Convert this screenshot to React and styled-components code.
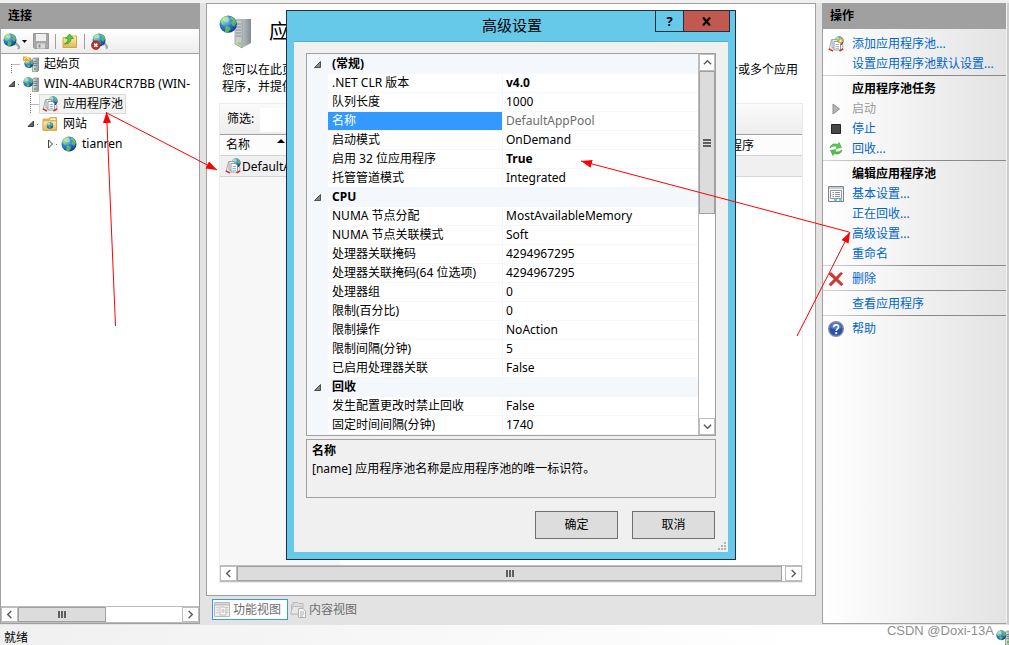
import { useState } from 'react';
import styled, { createGlobalStyle, css } from 'styled-components';

const GlobalStyle = createGlobalStyle`
  * {
    box-sizing: border-box;
  }

  body {
    margin: 0;
    background: #e3e3e3;
    color: #000;
    font-family: 'Noto Sans', 'Noto Sans CJK SC', sans-serif;
    font-size: 12px;
    line-height: 18px;
  }

  button,
  input {
    font: inherit;
    color: inherit;
  }
`;

// Tree on the left side
const treeNodes = [
  { level: 0, icon: 'home', label: '起始页', guide: 'first' },
  { level: 0, icon: 'server', label: 'WIN-4ABUR4CR7BB (WIN-', guide: 'open' },
  { level: 1, icon: 'pool', label: '应用程序池', guide: 'branch' },
  { level: 1, icon: 'folder', label: '网站', guide: 'open' },
  { level: 2, icon: 'globe', label: 'tianren', guide: 'closed' },
];

// Advanced settings of the application pool
const settings = [
  {
    category: '(常规)',
    rows: [
      { name: '.NET CLR 版本', value: 'v4.0', changed: true },
      { name: '队列长度', value: '1000' },
      { name: '名称', value: 'DefaultAppPool', readOnly: true },
      { name: '启动模式', value: 'OnDemand' },
      { name: '启用 32 位应用程序', value: 'True', changed: true },
      { name: '托管管道模式', value: 'Integrated' },
    ],
  },
  {
    category: 'CPU',
    rows: [
      { name: 'NUMA 节点分配', value: 'MostAvailableMemory' },
      { name: 'NUMA 节点关联模式', value: 'Soft' },
      { name: '处理器关联掩码', value: '4294967295' },
      { name: '处理器关联掩码(64 位选项)', value: '4294967295' },
      { name: '处理器组', value: '0' },
      { name: '限制(百分比)', value: '0' },
      { name: '限制操作', value: 'NoAction' },
      { name: '限制间隔(分钟)', value: '5' },
      { name: '已启用处理器关联', value: 'False' },
    ],
  },
  {
    category: '回收',
    rows: [
      { name: '发生配置更改时禁止回收', value: 'False' },
      { name: '固定时间间隔(分钟)', value: '1740' },
    ],
  },
];

const actionGroups = [
  {
    items: [
      { label: '添加应用程序池...', icon: 'addPool' },
      { label: '设置应用程序池默认设置...' },
    ],
  },
  {
    title: '应用程序池任务',
    items: [
      { label: '启动', icon: 'play', disabled: true },
      { label: '停止', icon: 'stop' },
      { label: '回收...', icon: 'recycle' },
    ],
  },
  {
    title: '编辑应用程序池',
    items: [
      { label: '基本设置...', icon: 'form' },
      { label: '正在回收...' },
      { label: '高级设置...' },
      { label: '重命名' },
    ],
  },
  { items: [{ label: '删除', icon: 'remove' }] },
  { items: [{ label: '查看应用程序' }] },
  { items: [{ label: '帮助', icon: 'help' }] },
];

/* ---------- Icons ---------- */

function IconDefs() {
  return (
    <HiddenSvg width="0" height="0" aria-hidden="true">
      <defs>
        <radialGradient id="sea" cx="0.35" cy="0.3" r="0.8">
          <stop offset="0" stopColor="#9fd4fb" />
          <stop offset="0.45" stopColor="#2f7fd8" />
          <stop offset="1" stopColor="#0b2f8c" />
        </radialGradient>
        <linearGradient id="land" x1="0" y1="0" x2="1" y2="1">
          <stop offset="0" stopColor="#a8ec8a" />
          <stop offset="1" stopColor="#2c9a35" />
        </linearGradient>
        <linearGradient id="metal" x1="0" y1="0" x2="1" y2="0">
          <stop offset="0" stopColor="#e4e8ea" />
          <stop offset="1" stopColor="#848b90" />
        </linearGradient>
        <linearGradient id="paper" x1="0" y1="0" x2="0" y2="1">
          <stop offset="0" stopColor="#fdf0b4" />
          <stop offset="1" stopColor="#e3b650" />
        </linearGradient>
      </defs>
    </HiddenSvg>
  );
}

function GlobeShape() {
  return (
    <>
      <circle cx="8" cy="8" r="7.5" fill="url(#sea)" />
      <path
        d="M1.2 6C2 3 4.5 1 7.5 1l1 1.5-2 1.2.8 1.8-2.2 1.7L4.5 9 3 8.2zM10 1.2c2.5.8 4.5 2.8 5.2 5.3L13.5 10l-2-1-1.3-2.5L12 5l-2-1.5zM6 9.5l3.5 1.2.5 1.8-2.2 2.7c-1.5 0-2.300-.3-2.8-.7z"
        fill="url(#land)"
      />
      <ellipse cx="6" cy="4" rx="3" ry="2" fill="#fff" opacity="0.35" />
    </>
  );
}

function ServerShape() {
  return (
    <>
      <path d="M9.5 3 11.5 2H15.500V15l-2 1h-4z" fill="url(#metal)" stroke="#7b8388" strokeWidth="0.7" />
      <path d="M10.5 5.500h3.500M10.5 7.500h3.500M10.5 9.500h3.500" stroke="#6e767c" strokeWidth="0.8" />
      <rect x="11" y="12" width="2" height="2" fill="#55c936" />
    </>
  );
}

function PoolShape() {
  return (
    <>
      <g transform="translate(6 0) scale(0.62)">
        <GlobeShape />
      </g>
      <path d="M3.500 3.500 1.500 12M14.500 8l.5 4" stroke="#a9afb5" strokeWidth="1" />
      <path d="M4 3.500h5.500V12H4z" fill="#e9ecef" stroke="#8d949b" strokeWidth="0.8" />
      <path d="M6 5.500h4.500L12.500 7.500V14H6z" fill="#fff" stroke="#808890" strokeWidth="0.8" />
      <path d="M7.500 8.500h3.500M7.500 10.500h3.500M7.500 12.300h3.500" stroke="#7aa2c8" strokeWidth="0.8" />
      <path d="M.7 12.800 5 15M15.300 12.800 11.500 15" stroke="#cf3a30" strokeWidth="1.700" />
    </>
  );
}

const shapes = {
  globe: <GlobeShape />,
  server: (
    <>
      <ServerShape />
      <g transform="translate(0 1) scale(0.66)">
        <GlobeShape />
      </g>
    </>
  ),
  home: (
    <>
      <ServerShape />
      <g transform="translate(1 2.500) scale(0.62)">
        <GlobeShape />
      </g>
      <path d="M0 .5h3.500l1 1H8v3.500H0z" fill="#f3a52b" />
      <path d="M1 3.500 3.500 1.500 6 3.500" fill="none" stroke="#fff0b8" />
    </>
  ),
  pool: <PoolShape />,
  addPool: (
    <>
      <PoolShape />
      <path d="m12.500 1 .8 2.200 2.200-.7-1 2 1.500 1.500-2.200.3-.6 2.200-1.400-1.800-2.200.5 1-2-1.200-1.800 2.300-.2z" fill="#f8a72c" />
      <circle cx="12.600" cy="4.700" r="1.200" fill="#fff3b0" />
    </>
  ),
  folder: (
    <>
      <path d="M1 3h6l1-1.500h6.500V14H1z" fill="#e8bd57" stroke="#c99a37" strokeWidth="0.7" />
      <path d="M8.500 2.500h5v1.500h-5z" fill="#fffbe8" />
      <path d="M1 5h13.500v9.500H1z" fill="url(#paper)" stroke="#d0a445" strokeWidth="0.7" />
      <g transform="translate(4.500 6) scale(0.43)">
        <GlobeShape />
      </g>
    </>
  ),
  connect: (
    <>
      <path d="m10 11 2.500-1 3 3.500-1.500 1.500" fill="none" stroke="#9aa7b0" strokeWidth="2" />
      <g transform="scale(0.82)">
        <GlobeShape />
      </g>
    </>
  ),
  disconnect: (
    <>
      <path d="m11 11 2-1 2.500 3.500-1.500 1" fill="none" stroke="#9aa7b0" strokeWidth="2" />
      <g transform="translate(1 0) scale(0.82)">
        <GlobeShape />
      </g>
      <circle cx="4.500" cy="11.500" r="4" fill="#c72c22" stroke="#8d140d" strokeWidth="0.6" />
      <path d="m3 10 3 3M6 10l-3 3" stroke="#fff" strokeWidth="1.400" />
    </>
  ),
  save: (
    <>
      <path d="M.5.5h15v15h-14l-1-1z" fill="#a7a7a7" stroke="#979797" />
      <path d="M3 1h10v7H3z" fill="#efefef" />
      <path d="M4 10.500h8v5H4z" fill="#dadada" />
      <path d="M5.500 11.500h2v3h-2z" fill="#8d8d8d" />
    </>
  ),
  up: (
    <>
      <path d="M1 4.500h5L8 3h6.500v11.500H1z" fill="url(#paper)" stroke="#c99a37" strokeWidth="0.8" />
      <path d="M2.500 11C5 10 6 8 6 5.500H3.500L7.500 1l4 4.500H9C9 9 6 11.500 2.500 11z" fill="#59cc3d" stroke="#2d8d22" strokeWidth="0.7" />
    </>
  ),
  play: <path d="M5 3v10l6.500-5z" fill="#b5b5b5" stroke="#8f8f8f" />,
  stop: <path d="M3.500 3.500h9v9h-9z" fill="#484848" stroke="#222" />,
  recycle: (
    <>
      <path d="M2 7c.5-3 3-4.500 6-4l1.500.5L11 1.500l2.500 5-5.500 1 1.300-1.700C7 4.500 4.500 5 2 7z" fill="#59cb4b" stroke="#3c9f37" strokeWidth="0.6" />
      <path d="M14 9c-.5 3-3 4.500-6 4l-1.500-.5L5 14.500l-2.500-5 5.500-1-1.300 1.700C9 11.500 11.500 11 14 9z" fill="#4fc244" stroke="#3c9f37" strokeWidth="0.6" />
    </>
  ),
  form: (
    <>
      <path d="M.5.5h15v15H.5z" fill="#f7f7f7" stroke="#7d8388" />
      <path d="M1 2h14" stroke="#b9bec2" strokeWidth="1.500" />
      <path d="M2.500 4.500h11v8h-11z" fill="#fff" stroke="#9097a0" />
      <path d="M4.500 6.500H6M4.500 8.500H6M4.500 10.500H6M7 6.500h5M7 8.500h5M7 10.500h5" stroke="#8a9097" />
      <path d="M6 14h3M11 14h3" stroke="#3cc5dd" strokeWidth="1.500" />
    </>
  ),
  remove: (
    <path
      d="M1 3 3 1.500 8 6.300l4.800-4.800L14.500 2.300 9.800 8l5.200 5.200-1.600 1.600L8 9.800 3 14.800l-2-1.300L6.200 8z"
      fill="#d9362c"
      stroke="#a51c18"
      strokeWidth="0.6"
    />
  ),
  help: (
    <>
      <circle cx="8" cy="8" r="7.300" fill="#2453b5" stroke="#8a8f98" strokeWidth="1.400" />
      <path d="M2.500 7a5.500 5.500 0 0 1 11 0c-3 1.500-8 1.500-11 0z" fill="#7ea4e8" opacity="0.5" />
      <path d="M5.700 6.200c0-3 4.800-3 4.800-.2C10.500 7.800 8.200 7.800 8.200 10" fill="none" stroke="#fff" strokeWidth="1.700" />
      <circle cx="8.200" cy="12.200" r="1.100" fill="#fff" />
    </>
  ),
  features: (
    <>
      <path d="M.5.5h15v14H.5z" fill="#ededed" stroke="#b9b9b9" />
      <path d="M1 2.500h14" stroke="#c3c3c3" strokeWidth="2" />
      <path d="M2.500 5.500h2M2.500 8h2M2.500 10.500h2M10 5.500h4M10 8h4M10 10.500h4" stroke="#c3c3c3" />
      <path d="M6 5h4.500L12 6.500V13H6z" fill="#fafafa" stroke="#c0c0c0" />
      <path d="M7.500 8h3M7.500 10h3" stroke="#a8a8a8" />
    </>
  ),
  content: (
    <>
      <path d="M1.500 3h1.500V.500h5l1 1h4V12H1.500z" fill="#dcdcdc" stroke="#b9b9b9" />
      <path d="M.5 12 3 4.500h8V12z" fill="#e8e8e8" stroke="#bdbdbd" />
      <path d="M8.500 6.500H13l2.500 2.500v6.500h-7z" fill="#f8f8f8" stroke="#b0b0b0" />
      <path d="M10 10h4M10 12h4M10 14h3" stroke="#adadad" />
    </>
  ),
};

function Icon({ name, size = 16 }) {
  return (
    <IconSvg width={size} height={size} viewBox="0 0 16 16" aria-hidden="true">
      {shapes[name]}
    </IconSvg>
  );
}

function PageIcon() {
  return (
    <IconSvg width="34" height="34" viewBox="0 0 34 34" aria-hidden="true">
      <path d="M16 5 20 4h12v24l-9 5-7-4z" fill="url(#metal)" />
      <path d="M16 5h7v28l-7-4z" fill="#c9cdd0" stroke="#8b9297" strokeWidth="0.7" />
      <path d="M17 9h5M17 12h5M17 15h5M17 18h5M17 21h5" stroke="#858c91" />
      <rect x="19" y="27" width="3" height="3" fill="#8ee23c" />
      <g transform="scale(1.15)">
        <GlobeShape />
      </g>
    </IconSvg>
  );
}

function Guide({ kind }) {
  return (
    <IconSvg width="17" height="20" viewBox="0 0 17 20" aria-hidden="true">
      {kind === 'first' && <path d="M8.500 10v10M8.500 10.500H17" fill="none" stroke="#777" strokeDasharray="1 1" />}
      {kind === 'branch' && <path d="M8.500 0v20M8.500 10.500H17" fill="none" stroke="#777" strokeDasharray="1 1" />}
      {kind === 'open' && (
        <>
          <path d="M6 12.500h5.500V7z" fill="#666" stroke="#222" strokeWidth="0.8" />
          <path d="M15 10.500h2" stroke="#777" strokeDasharray="1 1" />
        </>
      )}
      {kind === 'closed' && (
        <>
          <path d="M7.500 6v8l4-4z" fill="#fff" stroke="#444" />
          <path d="M15 10.500h2" stroke="#777" strokeDasharray="1 1" />
        </>
      )}
    </IconSvg>
  );
}

const chevrons = {
  left: 'M7 1 3 5l4 4',
  right: 'M3 1l4 4-4 4',
  up: 'M1 7l4-4 4 4',
  down: 'M1 3l4 4 4-4',
};

function Chevron({ to }) {
  return (
    <IconSvg width="9" height="9" viewBox="0 0 10 10" aria-hidden="true">
      <path d={chevrons[to]} fill="none" stroke="#5a5a5a" strokeWidth="1.600" />
    </IconSvg>
  );
}

function ScrollBar({ vertical, thumb, rest }) {
  return (
    <ScrollTrack $vertical={vertical}>
      <ScrollButton type="button" aria-label={vertical ? '向上' : '向左'}>
        <Chevron to={vertical ? 'up' : 'left'} />
      </ScrollButton>
      <ScrollThumb $vertical={vertical} $grow={thumb}>
        <i />
        <i />
        <i />
      </ScrollThumb>
      <ScrollRest $grow={rest} />
      <ScrollButton type="button" aria-label={vertical ? '向下' : '向右'}>
        <Chevron to={vertical ? 'down' : 'right'} />
      </ScrollButton>
    </ScrollTrack>
  );
}

/* ---------- Panels ---------- */

function ConnectionsPanel() {
  return (
    <SidePanel>
      <PanelHeader>连接</PanelHeader>
      <Toolbar>
        <ToolButton type="button" aria-label="连接">
          <Icon name="connect" size={17} />
          <svg width="5" height="3" viewBox="0 0 5 3" aria-hidden="true">
            <path d="M0 0h5L2.500 3z" />
          </svg>
        </ToolButton>
        <ToolButton type="button" aria-label="保存" disabled>
          <Icon name="save" />
        </ToolButton>
        <ToolDivider />
        <ToolButton type="button" aria-label="向上">
          <Icon name="up" />
        </ToolButton>
        <ToolDivider />
        <ToolButton type="button" aria-label="断开连接">
          <Icon name="disconnect" size={17} />
        </ToolButton>
      </Toolbar>
      <Tree>
        {treeNodes.map((node) => (
          <TreeRow key={node.label} $level={node.level}>
            <Guide kind={node.guide} />
            <TreeLabel type="button" $selected={node.icon === 'pool'}>
              <Icon name={node.icon} />
              {node.label}
            </TreeLabel>
          </TreeRow>
        ))}
      </Tree>
      <ScrollBar thumb={87} rest={77} />
    </SidePanel>
  );
}

function PoolsPage() {
  const [filter, setFilter] = useState('');

  return (
    <PageColumn>
      <Page>
        <PageTitle>
          <PageIcon />
          <h1>应用程序池</h1>
        </PageTitle>
        <PageText>
          您可以在此页上查看和管理服务器上的应用程序池列表。应用程序池与工作进程相关联，包含一个或多个应用程序，并提供不同应用程序之间的隔离。
        </PageText>
        <PoolList>
          <FilterBar>
            <label htmlFor="filter">筛选:</label>
            <input id="filter" value={filter} onChange={(e) => setFilter(e.target.value)} />
          </FilterBar>
          <PoolTable>
            <thead>
              <tr>
                <th>
                  <SortHeader>
                    名称
                    <svg width="8" height="4" viewBox="0 0 8 4" aria-hidden="true">
                      <path d="M0 4h8L4 0z" />
                    </svg>
                  </SortHeader>
                </th>
                <th />
                <th>应用程序</th>
              </tr>
            </thead>
            <tbody>
              <tr>
                <td>
                  <PoolName>
                    <Icon name="pool" />
                    DefaultAppPool
                  </PoolName>
                </td>
                <td />
                <td />
              </tr>
            </tbody>
          </PoolTable>
          <SortedColumn />
          <ScrollBar thumb={545} rest={3} />
        </PoolList>
      </Page>
      <ViewTabs>
        <ViewTab type="button" $active>
          <Icon name="features" />
          功能视图
        </ViewTab>
        <ViewTab type="button">
          <Icon name="content" />
          内容视图
        </ViewTab>
      </ViewTabs>
    </PageColumn>
  );
}

function ActionsPanel() {
  return (
    <SidePanel $openEdge>
      <PanelHeader>操作</PanelHeader>
      <Actions>
        {actionGroups.map((group, index) => (
          <ActionGroup key={index}>
            {group.title && <h2>{group.title}</h2>}
            {group.items.map((item) => (
              <ActionRow key={item.label}>
                <ActionIcon>{item.icon && <Icon name={item.icon} />}</ActionIcon>
                <ActionLink href="#" aria-disabled={item.disabled} $disabled={item.disabled}>
                  {item.label}
                </ActionLink>
              </ActionRow>
            ))}
          </ActionGroup>
        ))}
      </Actions>
    </SidePanel>
  );
}

function SettingsDialog() {
  const [selected, setSelected] = useState('名称');

  return (
    <Dialog role="dialog" aria-labelledby="dialog-title">
      <TitleBar>
        <h2 id="dialog-title">高级设置</h2>
        <CaptionButtons>
          <CaptionButton type="button">?</CaptionButton>
          <CaptionButton type="button" aria-label="关闭" $close>
            <svg width="9" height="9" viewBox="0 0 9 9" aria-hidden="true">
              <path d="M1 0.500 8 8.500M8 0.500 1 8.500" stroke="#000" strokeWidth="2.200" />
            </svg>
          </CaptionButton>
        </CaptionButtons>
      </TitleBar>
      <DialogBody>
        <PropertyGrid>
          <PropertyTable>
            {settings.map((group) => (
              <tbody key={group.category}>
                <CategoryRow>
                  <td>
                    <svg width="7" height="7" viewBox="0 0 7 7" aria-hidden="true">
                      <path d="M0.500 6.500h6v-6z" fill="#888" stroke="#333" strokeWidth="0.8" />
                    </svg>
                  </td>
                  <th colSpan="2">{group.category}</th>
                </CategoryRow>
                {group.rows.map((row) => (
                  <PropertyRow
                    key={row.name}
                    $selected={row.name === selected}
                    $changed={row.changed}
                    $readOnly={row.readOnly}
                    onClick={() => setSelected(row.name)}
                  >
                    <td />
                    <th>{row.name}</th>
                    <td>{row.value}</td>
                  </PropertyRow>
                ))}
              </tbody>
            ))}
          </PropertyTable>
          <ScrollBar vertical thumb={142} rest={205} />
        </PropertyGrid>
        <Description>
          <strong>名称</strong>
          <p>[name] 应用程序池名称是应用程序池的唯一标识符。</p>
        </Description>
        <DialogButtons>
          <DialogButton type="button">确定</DialogButton>
          <DialogButton type="button">取消</DialogButton>
        </DialogButtons>
        <SizeGrip width="9" height="9" viewBox="0 0 9 9" aria-hidden="true">
          <path d="M6 1h2M3 4h2M6 4h2M0 7h2M3 7h2M6 7h2" stroke="#b4b4b4" strokeWidth="2" />
        </SizeGrip>
      </DialogBody>
    </Dialog>
  );
}

// Red arrows that show the order of the clicks
function Arrows() {
  return (
    <ArrowLayer width="1009" height="645" viewBox="0 0 1009 645" aria-hidden="true">
      <defs>
        <marker id="head" markerWidth="12" markerHeight="8" refX="11" refY="4" orient="auto" markerUnits="userSpaceOnUse">
          <path d="M0 0 11 4 0 8z" fill="#f00" />
        </marker>
      </defs>
      <g stroke="#f00" strokeWidth="1" fill="none">
        <path d="M115.500 326 106.500 112" markerEnd="url(#head)" />
        <path d="M107 113 217 170" markerEnd="url(#head)" />
        <path d="M849 232 581 161" markerEnd="url(#head)" />
        <path d="M797 336 850 232" markerEnd="url(#head)" />
      </g>
    </ArrowLayer>
  );
}

export default function App() {
  return (
    <Window>
      <GlobalStyle />
      <IconDefs />
      <Workspace>
        <ConnectionsPanel />
        <PoolsPage />
        <ActionsPanel />
      </Workspace>
      <StatusBar>
        <span>就绪</span>
        <Watermark>
          CSDN @Doxi-13A
          <Icon name="server" />
        </Watermark>
      </StatusBar>
      <SettingsDialog />
      <Arrows />
    </Window>
  );
}

/* ---------- Styles ---------- */

const HiddenSvg = styled.svg`
  position: absolute;
`;

const IconSvg = styled.svg`
  display: block;
  flex: none;
`;

const Window = styled.div`
  position: relative;
  display: flex;
  flex-direction: column;
  height: 100vh;
  overflow: hidden;
  border-top: 3px solid #f0f0f0;
`;

const Workspace = styled.main`
  flex: 1;
  min-height: 0;
  display: grid;
  grid-template-columns: 200px 1fr 185px;
  gap: 6px;
  border-right: 2px solid #cdcdcd;
  border-bottom: 1px solid #e3e3e3;
`;

const SidePanel = styled.section`
  display: flex;
  flex-direction: column;
  min-width: 0;
  background: #fff;
  border: 1px solid #a0a0a0;
  border-top: 0;
  ${({ $openEdge }) => $openEdge && 'border-right-color: #f0f0f0;'}
`;

const PanelHeader = styled.h2`
  margin: 0;
  height: 26px;
  padding: 0 7px;
  background: #a0a0a0;
  font-size: 12px;
  line-height: 26px;
`;

const Toolbar = styled.div`
  display: flex;
  align-items: center;
  gap: 6px;
  height: 25px;
  padding: 0 2px;
  background: linear-gradient(#fff, #ececec);
  border-bottom: 1px solid #a0a0a0;
`;

const ToolButton = styled.button`
  display: flex;
  align-items: center;
  gap: 2px;
  padding: 0;
  border: 0;
  background: none;
`;

const ToolDivider = styled.span`
  width: 1px;
  height: 15px;
  background: #a0a0a0;
`;

const Tree = styled.ul`
  flex: 1;
  margin: 0;
  padding: 0;
  list-style: none;
  overflow: hidden;
`;

const TreeRow = styled.li`
  display: flex;
  align-items: center;
  height: 20px;
  padding-left: ${({ $level }) => 2 + $level * 19}px;
`;

const TreeLabel = styled.button`
  display: flex;
  align-items: center;
  gap: 5px;
  height: 20px;
  padding: 0 2px;
  border: 1px solid ${({ $selected }) => ($selected ? '#d9d9d9' : 'transparent')};
  background: ${({ $selected }) => ($selected ? '#f2f2f2' : 'none')};
  white-space: nowrap;
`;

const ScrollTrack = styled.div`
  display: flex;
  flex: none;
  flex-direction: ${({ $vertical }) => ($vertical ? 'column' : 'row')};
  ${({ $vertical }) => ($vertical ? 'width: 17px;' : 'height: 17px;')}
  background: #fff;
  border: 0 solid #bdbdbd;
  ${({ $vertical }) => ($vertical ? 'border-left-width: 1px;' : 'border-width: 1px 0;')}
`;

const ScrollButton = styled.button`
  display: flex;
  flex: 0 0 17px;
  align-items: center;
  justify-content: center;
  padding: 0;
  border: 1px solid #bdbdbd;
  background: #fff;
`;

const ScrollThumb = styled.div`
  display: flex;
  flex: ${({ $grow }) => $grow} 1 0;
  flex-direction: ${({ $vertical }) => ($vertical ? 'column' : 'row')};
  align-items: center;
  justify-content: center;
  gap: 1px;
  background: #dcdcdc;
  border: 1px solid #a0a0a0;

  i {
    ${({ $vertical }) => ($vertical ? 'width: 8px; height: 2px;' : 'width: 2px; height: 7px;')}
    background: #606060;
  }
`;

const ScrollRest = styled.div`
  flex: ${({ $grow }) => $grow} 1 0;
`;

const PageColumn = styled.div`
  display: flex;
  flex-direction: column;
  min-width: 0;
`;

const Page = styled.section`
  flex: 1;
  min-height: 0;
  display: flex;
  flex-direction: column;
  padding: 11px 12px 12px;
  background: #fff;
  border: 1px solid #a0a0a0;
`;

const PageTitle = styled.header`
  display: flex;
  align-items: center;
  gap: 16px;
  height: 34px;

  h1 {
    margin: 0;
    font-size: 20px;
    font-weight: 400;
    line-height: 28px;
  }
`;

const PageText = styled.p`
  margin: 12px 2px 8px 3px;
  line-height: 17px;
`;

const PoolList = styled.div`
  flex: 1;
  min-height: 0;
  display: flex;
  flex-direction: column;
  border: 1px solid #ececec;
`;

const FilterBar = styled.div`
  display: flex;
  align-items: stretch;
  height: 31px;
  padding-bottom: 2px;
  background: linear-gradient(#fbfbfb, #ededed);
  border-bottom: 1px solid #a0a0a0;

  label {
    width: 40px;
    padding-left: 7px;
    line-height: 30px;
  }

  input {
    width: 160px;
    margin-top: 4px;
    border: 0;
    background: #fff;
  }
`;

const PoolTable = styled.table`
  width: 100%;
  table-layout: fixed;
  border-spacing: 0;

  th,
  td {
    height: 20px;
    padding: 0 5px;
    border-bottom: 1px solid #d5d5d5;
    font-weight: 400;
    text-align: left;
    white-space: nowrap;
    line-height: 19px;
  }

  th {
    padding: 0 6px;
    background: #fcfcfc;
  }

  th:first-child {
    width: 120px;
  }

  th:last-child {
    width: 102px;
  }

  td {
    height: 21px;
    background: #f0f0f0;
  }
`;

const SortHeader = styled.span`
  display: flex;
  align-items: center;
  gap: 27px;
  padding-bottom: 1px;

  svg {
    margin-bottom: 8px;
  }
`;

const PoolName = styled.span`
  display: flex;
  align-items: center;
  gap: 1px;
`;

const SortedColumn = styled.div`
  flex: 1;
  width: 120px;
  background: #f7f7f7;
`;

const ViewTabs = styled.div`
  display: flex;
  height: 28px;
  padding: 3px 6px 4px;
`;

const ViewTab = styled.button`
  display: flex;
  align-items: center;
  gap: 3px;
  padding: 0 6px 0 1px;
  border: 1px solid ${({ $active }) => ($active ? '#3399ff' : 'transparent')};
  background: ${({ $active }) => ($active ? '#fff' : 'none')};
  color: #6d6d6d;
`;

const Actions = styled.nav`
  flex: 1;
  padding-top: 4px;
  background: linear-gradient(to right, #fff, #e3e3e3);
`;

const ActionGroup = styled.div`
  padding: 3px 0 1px;
  border-bottom: 1px solid;
  border-image: linear-gradient(to right, #d8d8d8, #8a8a8a 50%) 1;

  &:first-child {
    padding-top: 1px;
  }

  &:last-child {
    border: 0;
  }

  h2 {
    margin: 0;
    padding-left: 29px;
    font-size: 12px;
    line-height: 20px;
  }
`;

const ActionRow = styled.div`
  display: flex;
  align-items: center;
  gap: 8px;
  height: 20px;
  padding-left: 5px;
`;

const ActionIcon = styled.span`
  width: 16px;
`;

const ActionLink = styled.a`
  color: ${({ $disabled }) => ($disabled ? '#9c9c9c' : '#0066cc')};
  text-decoration: none;
  white-space: nowrap;
`;

const StatusBar = styled.footer`
  display: flex;
  justify-content: space-between;
  height: 20px;
  padding: 4px 4px 0;
  background: linear-gradient(to right, #f0f0f0, #fff 80%);
`;

const Watermark = styled.span`
  display: flex;
  gap: 2px;
  margin-right: -7px;
  color: #8f8f8f;
  font-family: 'Liberation Sans', Arial, sans-serif;
  font-size: 13px;
  line-height: 4px;
`;

const Dialog = styled.section`
  position: absolute;
  top: 7px;
  left: 286px;
  width: 450px;
  background: #67c9ea;
  border: 1px solid #20303a;
  padding: 0 7px 7px;
`;

const TitleBar = styled.header`
  display: grid;
  grid-template-columns: 75px 1fr 75px;
  height: 30px;
  margin-right: -2px;

  h2 {
    grid-column: 2;
    margin: 0;
    font-size: 15px;
    font-weight: 400;
    line-height: 28px;
    text-align: center;
  }
`;

const CaptionButtons = styled.div`
  display: flex;
  height: 21px;
`;

const CaptionButton = styled.button`
  display: flex;
  align-items: center;
  justify-content: center;
  width: 29px;
  padding: 0;
  border: 1px solid #20303a;
  border-top: 0;
  background: none;
  font-size: 13px;
  font-weight: 700;

  ${({ $close }) =>
    $close &&
    css`
      width: 46px;
      border-left: 0;
      background: #c2594f;
    `}
`;

const DialogBody = styled.div`
  position: relative;
  padding: 11px 12px 12px;
  background: #f0f0f0;
  border-top: 1px solid #59b0ce;
`;

const PropertyGrid = styled.div`
  display: flex;
  border: 1px solid #a0a0a0;
`;

const PropertyTable = styled.table`
  flex: 1;
  table-layout: fixed;
  border-spacing: 0;
  padding-top: 1px;
  background: #f4f7fc;

  th,
  td {
    height: 19px;
    padding: 0 4px;
    border-bottom: 1px solid #f4f7fc;
    line-height: 18px;
    text-align: left;
    white-space: nowrap;
  }

  td:last-child {
    padding: 0 3px;
  }

  td:first-child {
    width: 21px;
    padding: 0 7px;
  }

  th {
    width: 174px;
  }
`;

const CategoryRow = styled.tr`
  svg {
    display: block;
  }
`;

const PropertyRow = styled.tr`
  th {
    background: ${({ $selected }) => ($selected ? '#3399ff' : '#fff')};
    background-clip: padding-box;
    color: ${({ $selected }) => ($selected ? '#fff' : '#000')};
    font-weight: 400;
  }

  td:last-child {
    background: #fff;
    background-clip: padding-box;
    border-left: 1px solid #f4f7fc;
    color: ${({ $readOnly }) => ($readOnly ? '#6d6d6d' : '#000')};
    font-weight: ${({ $changed }) => ($changed ? 700 : 400)};
  }
`;

const Description = styled.div`
  height: 59px;
  margin-top: 3px;
  padding: 2px 5px;
  border: 1px solid #a0a0a0;

  p {
    margin: 0;
  }
`;

const DialogButtons = styled.div`
  display: flex;
  justify-content: flex-end;
  gap: 14px;
  padding: 13px 1px 1px;
`;

const DialogButton = styled.button`
  width: 83px;
  height: 28px;
  padding: 0;
  border: 1px solid #707070;
  background: #dddddd;
`;

const SizeGrip = styled.svg`
  position: absolute;
  right: 1px;
  bottom: 1px;
`;

const ArrowLayer = styled.svg`
  position: absolute;
  top: -3px;
  left: 0;
  pointer-events: none;
`;
